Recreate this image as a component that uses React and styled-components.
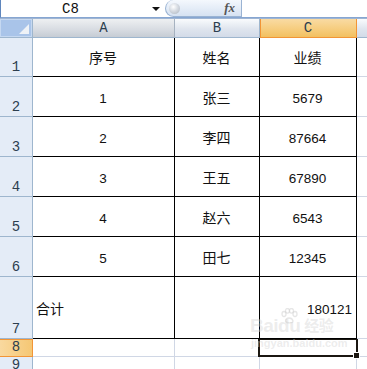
import React from 'react';
import styled, { createGlobalStyle, css } from 'styled-components';

const GlobalStyle = createGlobalStyle`
  html, body {
    margin: 0;
    padding: 0;
    background: #ffffff;
    overflow: hidden;
  }
  body {
    width: 367px;
    height: 369px;
  }
`;

const GRID = '#d0d7e5';
const HEAD_LINE = '#9eb6ce';
const ORANGE = '#f29536';

const Window = styled.div`
  width: 367px;
  height: 369px;
  display: flex;
  flex-direction: column;
  overflow: hidden;
  position: relative;
  background: #fff;
`;

const FormulaBar = styled.div`
  height: 17px;
  display: flex;
  align-items: stretch;
  border-left: 1px solid #5f86bd;
  border-bottom: 1px solid #86a6d2;
  background: #fff;
`;

const NameBox = styled.div`
  width: 139px;
  display: flex;
  align-items: center;
  justify-content: center;
  font-family: "Liberation Mono", "DejaVu Sans Mono", monospace;
  font-size: 14px;
  color: #111;
  padding-right: 6px;
`;

const DropArrow = styled.div`
  width: 19px;
  display: flex;
  align-items: center;
  justify-content: center;

  &::after {
    content: '';
    border-left: 4px solid transparent;
    border-right: 4px solid transparent;
    border-top: 4px solid #111;
    margin-top: 1px;
  }
`;

const Pill = styled.div`
  width: 77px;
  display: flex;
  align-items: center;
  justify-content: space-between;
  box-sizing: border-box;
  border: 1px solid #9ab3d3;
  border-top: none;
  border-radius: 9px 0 0 9px;
  background: linear-gradient(#f4f8fd, #d6e2f2);
  padding: 0 6px 0 3px;
`;

const Knob = styled.div`
  width: 11px;
  height: 11px;
  border-radius: 50%;
  background: radial-gradient(circle at 40% 35%, #ffffff 0%, #d6dbe2 45%, #a9b2bd 100%);
`;

const Fx = styled.span`
  font-family: "Liberation Serif", "DejaVu Serif", serif;
  font-style: italic;
  font-weight: bold;
  font-size: 13px;
  color: #555;
`;

const Strip = styled.div`
  height: 3px;
  background: #edf2f9;
  border-bottom: 1px solid #9fb5d3;
`;

const Sheet = styled.div`
  flex: 1;
  display: grid;
  grid-template-columns: 33px 142px 85px 97px 1fr;
  grid-template-rows: 19px 39px 40px 40px 40px 40px 40px 62px 18px 1fr;
  font-family: "Liberation Sans", "Noto Sans CJK SC", sans-serif;
`;

const Corner = styled.div`
  box-sizing: border-box;
  background: #a9c4e9;
  border-right: 1px solid ${HEAD_LINE};
  border-bottom: 1px solid ${HEAD_LINE};
  box-shadow: inset 0 0 0 1px #c5d8f1;
  position: relative;

  &::after {
    content: '';
    position: absolute;
    right: 3px;
    bottom: 3px;
    width: 0;
    height: 0;
    border-left: 10px solid transparent;
    border-bottom: 10px solid #eef2f7;
  }
`;

const ColHead = styled.div`
  box-sizing: border-box;
  display: flex;
  align-items: center;
  justify-content: center;
  font-family: "Liberation Mono", "DejaVu Sans Mono", monospace;
  font-size: 14px;
  color: #2c3e4f;
  border-right: 1px solid ${HEAD_LINE};
  border-bottom: 1px solid ${HEAD_LINE};
  background: linear-gradient(#f9fbfd, #dfe5ee 55%, #d3dbe8);

  ${({ $tone }) => $tone === 'gray' && css`
    background: linear-gradient(#eef0f2, #d9dde3 55%, #c6ccd4);
    border-right-color: #a6b2c0;
  `}

  ${({ $tone }) => $tone === 'active' && css`
    background: linear-gradient(#f9dba3, #f6cd7f 55%, #f2c060);
    border-right-color: ${ORANGE};
    border-bottom-color: ${ORANGE};
    box-shadow: inset 1px 0 0 ${ORANGE};
  `}

  ${({ $tone }) => $tone === 'end' && css`
    border-right: none;
  `}
`;

const RowHead = styled.div`
  box-sizing: border-box;
  display: flex;
  align-items: flex-end;
  justify-content: center;
  padding-bottom: 1px;
  font-family: "Liberation Mono", "DejaVu Sans Mono", monospace;
  font-size: 14px;
  line-height: 16px;
  color: #2c3e4f;
  background: #e4ecf7;
  border-right: 1px solid ${HEAD_LINE};
  border-bottom: 1px solid ${HEAD_LINE};
  overflow: hidden;

  ${({ $active }) => $active && css`
    background: linear-gradient(90deg, #f9d99f, #f5c774);
    border-right-color: ${ORANGE};
    border-bottom-color: ${ORANGE};
    box-shadow: inset 0 1px 0 ${ORANGE};
  `}
`;

const Cell = styled.div`
  box-sizing: border-box;
  display: flex;
  align-items: center;
  justify-content: ${({ $align }) => ($align === 'left' ? 'flex-start' : $align === 'right' ? 'flex-end' : 'center')};
  padding: 0 4px 0 3px;
  font-size: ${({ $num }) => ($num ? '13.5px' : '14px')};
  padding-top: ${({ $num }) => ($num ? '4px' : '0')};
  color: #111;
  border-right: 1px solid ${({ $ruled }) => ($ruled ? '#000' : GRID)};
  border-bottom: 1px solid ${({ $ruled }) => ($ruled ? '#000' : GRID)};
  position: relative;

  ${({ $edge }) => $edge && css`
    border-right: none;
  `}

  ${({ $selected }) => $selected && css`
    &::after {
      content: '';
      position: absolute;
      left: -2px;
      top: 0;
      right: -2px;
      bottom: -1px;
      border: 2px solid #1b1711;
      border-top-width: 1px;
      z-index: 2;
    }
    &::before {
      content: '';
      position: absolute;
      right: -4px;
      bottom: -3px;
      width: 5px;
      height: 5px;
      background: #1b1711;
      border: 1px solid #fff;
      z-index: 3;
    }
  `}
`;

const Watermark = styled.div`
  position: absolute;
  left: 250px;
  top: 316px;
  display: flex;
  flex-direction: column;
  align-items: flex-start;
  gap: 1px;
  pointer-events: none;
  color: rgba(214, 214, 214, 0.45);
  z-index: 4;
`;

const MarkTop = styled.div`
  display: flex;
  align-items: flex-end;
  font-family: "Liberation Sans", "Noto Sans CJK SC", sans-serif;
  font-weight: bold;
  font-size: 19px;
  line-height: 20px;
  letter-spacing: -0.5px;
  position: relative;
`;

const MarkCn = styled.span`
  font-size: 15px;
  margin-left: 4px;
`;

const MarkUrl = styled.div`
  font-family: "Liberation Sans", sans-serif;
  font-weight: bold;
  font-size: 11px;
  line-height: 13px;
  margin-left: 1px;
`;

const Paw = () => (
  <svg width="18" height="16" viewBox="0 0 18 16" style={{ position: 'absolute', left: 30, top: -8 }}>
    <g fill="none" stroke="rgba(205,205,205,0.5)" strokeWidth="1.3">
      <ellipse cx="4" cy="6" rx="2" ry="2.5" />
      <ellipse cx="7.5" cy="2.8" rx="2" ry="2.3" />
      <ellipse cx="11.5" cy="2.8" rx="2" ry="2.3" />
      <ellipse cx="15" cy="6" rx="2" ry="2.5" />
      <path d="M5.5 13 C6 9 12 9 13 13 C13 15.5 6 15.5 5.5 13 Z" />
    </g>
  </svg>
);

const rows = [
  { n: 1, a: '序号', b: '姓名', c: '业绩', num: false },
  { n: 2, a: '1', b: '张三', c: '5679', num: true },
  { n: 3, a: '2', b: '李四', c: '87664', num: true },
  { n: 4, a: '3', b: '王五', c: '67890', num: true },
  { n: 5, a: '4', b: '赵六', c: '6543', num: true },
  { n: 6, a: '5', b: '田七', c: '12345', num: true },
];

export default function App() {
  return (
    <Window>
      <GlobalStyle />
      <FormulaBar>
        <NameBox>C8</NameBox>
        <DropArrow />
        <Pill>
          <Knob />
          <Fx>fx</Fx>
        </Pill>
      </FormulaBar>
      <Strip />
      <Sheet>
        <Corner />
        <ColHead $tone="gray">A</ColHead>
        <ColHead>B</ColHead>
        <ColHead $tone="active">C</ColHead>
        <ColHead $tone="end" />

        {rows.map((r) => (
          <React.Fragment key={r.n}>
            <RowHead>{r.n}</RowHead>
            <Cell $ruled $num={r.num}>{r.a}</Cell>
            <Cell $ruled>{r.b}</Cell>
            <Cell $ruled $num={r.num}>{r.c}</Cell>
            <Cell $edge />
          </React.Fragment>
        ))}

        <RowHead>7</RowHead>
        <Cell $ruled $align="left">合计</Cell>
        <Cell $ruled />
        <Cell $ruled $align="right" $num>180121</Cell>
        <Cell $edge />

        <RowHead $active>8</RowHead>
        <Cell />
        <Cell />
        <Cell $selected />
        <Cell $edge />

        <RowHead>9</RowHead>
        <Cell />
        <Cell />
        <Cell />
        <Cell $edge />
      </Sheet>
      <Watermark>
        <MarkTop>
          Bai<span>du</span>
          <MarkCn>经验</MarkCn>
          <Paw />
        </MarkTop>
        <MarkUrl>jingyan.baidu.com</MarkUrl>
      </Watermark>
    </Window>
  );
}
